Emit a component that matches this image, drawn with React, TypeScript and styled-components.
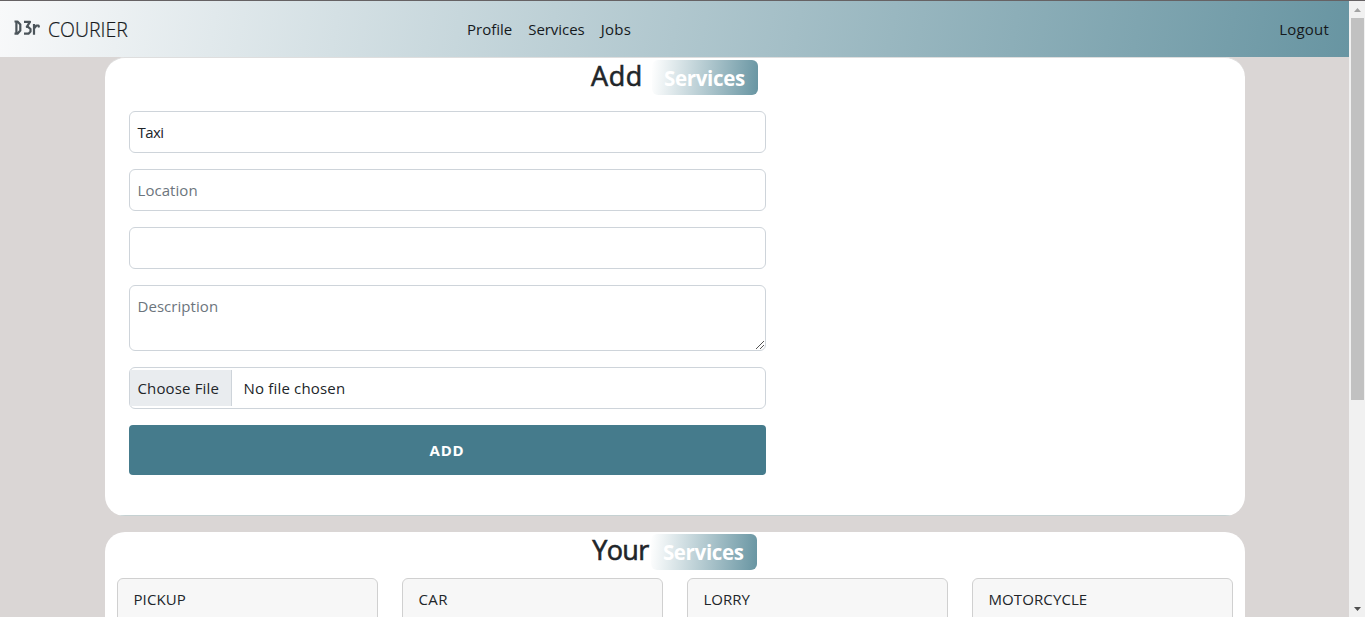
import React from "react";
import styled, { createGlobalStyle } from "styled-components";

const GlobalStyle = createGlobalStyle`
  * { box-sizing: border-box; }
  body {
    margin: 0;
    height: 617px;
    overflow: hidden;
    background: #dad6d5;
    color: #212529;
    font: 400 16px/24px "Open Sans", "Noto Sans", sans-serif;
  }
`;

const fade = "#f8f9fa, #6895a2";

const Text = styled.span<{ $track?: number }>`
  letter-spacing: ${(p) => p.$track ?? 0}px;
  white-space: nowrap;
`;

const Window = styled.div`
  display: flex;
  height: 617px;
  border-top: 1px solid #666264;
  overflow: hidden;
`;

const Page = styled.div`
  flex: 1;
  min-width: 0;
`;

const Navbar = styled.nav`
  display: grid;
  grid-template-columns: 467px 1fr auto;
  align-items: center;
  height: 56px;
  padding-right: 20px;
  background: linear-gradient(100deg, ${fade});
  font-size: 15px;
  color: #15191c;
`;

const Brand = styled.div`
  display: flex;
  align-items: center;
  gap: 8px;
  padding: 2px 0 0 14px;
  font-size: 19.5px;
  font-weight: 300;
  line-height: 30px;
  -webkit-text-stroke: 0.2px currentColor;
`;

const Logo = styled.svg`
  width: 26px;
  height: 18px;
  margin-top: -6px;
`;

const Links = styled.div`
  display: flex;
  gap: 16px;
`;

const Panel = styled.section`
  display: flow-root;
  width: 1140px;
  margin: 0 auto 16px;
  padding: 0 12px;
  border-radius: 20px;
  background: #fff;
`;

const FormPanel = styled(Panel)`
  height: 459px;
  margin-top: 0;
  border-top: 1px solid #dedede;
  background: linear-gradient(#c5d1d2, #c5d1d2) bottom / 1116px 1px no-repeat, #fff;
`;

const Heading = styled.h3<{ $gap: number; $height: number }>`
  display: flex;
  justify-content: center;
  align-items: flex-start;
  gap: ${(p) => p.$gap}px;
  height: ${(p) => p.$height}px;
  margin: 0;
  padding-top: 2px;
  font-size: 27px;
  font-weight: 500;
  line-height: 33px;
  -webkit-text-stroke: 0.6px currentColor;
`;

const Badge = styled.span<{ $height: number }>`
  display: flex;
  justify-content: center;
  width: 106px;
  height: ${(p) => p.$height}px;
  padding-top: 1px;
  padding-right: 1px;
  border-radius: 6px;
  background: linear-gradient(95deg, #fff, #6895a2);
  color: #fff;
  font-size: 20.5px;
  font-weight: 700;
  line-height: 35px;
  -webkit-text-stroke: 0;
`;

const Title = styled(Text)`
  margin-top: -1px;
`;

const Form = styled.div`
  display: flex;
  flex-direction: column;
  gap: 16px;
  width: 637px;
  margin: 16px 0 0 12px;
`;

const Field = styled.div<{ $placeholder?: boolean; $height?: number }>`
  position: relative;
  display: flex;
  align-items: flex-start;
  height: ${(p) => p.$height ?? 42}px;
  padding: 8px;
  border: 1px solid #ced4da;
  border-radius: 6px;
  color: ${(p) => (p.$placeholder ? "#6c757d" : "#212529")};
  background: #fff;
  font-size: 15px;
`;

const FileField = styled(Field)`
  align-items: center;
  padding: 0;
  gap: 12px;
`;

const FileButton = styled.span`
  width: 102px;
  height: 36px;
  padding: 6px 0 0 8px;
  border-right: 1px solid #ced4da;
  background: #e9ecef;
`;

const Grip = styled.svg`
  position: absolute;
  right: 1px;
  bottom: 1px;
  width: 8px;
  height: 8px;
`;

const Submit = styled.button`
  height: 50px;
  padding: 0;
  border: 0;
  border-radius: 4px;
  background: #457b8c;
  color: #fff;
  font: 700 15px/24px "Open Sans", sans-serif;
`;

const Cards = styled.div`
  display: grid;
  grid-template-columns: repeat(4, 1fr);
  gap: 24px;
`;

const Card = styled.article`
  height: 120px;
  border: 1px solid #d0d0d0;
  border-radius: 6px;
  background: #f7f7f7;
  padding: 8px 16px;
  font-size: 15px;
`;

const Scrollbar = styled.div`
  display: flex;
  flex-direction: column;
  align-items: center;
  width: 16px;
  background: #f1f1f1;
`;

const Thumb = styled.div`
  width: 13px;
  height: 382px;
  margin-left: 1px;
  margin-bottom: auto;
  background: #c1c1c1;
`;

const Arrow = styled.svg`
  width: 16px;
  height: 17px;
  flex: none;
`;

export default function App() {
  return (
    <>
      <GlobalStyle />
      <Window>
        <Page>
          <Navbar>
            <Brand>
              <Logo viewBox="0 0 26 18" fill="none" stroke="#4b545a" strokeWidth="2.2" strokeLinejoin="round">
                <path d="M0.500 3.500H3.500L6.300 6.500V12.500L3.500 15.700H0.500M2.400 3.500V15.700" />
                <path d="M10 3.800H16L12.800 8.800H14L16.500 11V13.500L14.500 15.700H10" />
                <path d="M20 6V16.700M20 10.500L22.500 7.500H24.500L25 9.500" />
              </Logo>
              <Text>COURIER</Text>
            </Brand>
            <Links>
              <Text>Profile</Text>
              <Text $track={-0.05}>Services</Text>
              <Text $track={0.3}>Jobs</Text>
            </Links>
            <Text $track={0.2}>Logout</Text>
          </Navbar>
          <FormPanel>
            <Heading $gap={9} $height={37}>
              <Title $track={0.6}>Add</Title>
              <Badge $height={35}>
                <Text $track={-0.35}>Services</Text>
              </Badge>
            </Heading>
            <Form>
              <Field><Text $track={-0.6}>Taxi</Text></Field>
              <Field $placeholder><Text $track={0.05}>Location</Text></Field>
              <Field />
              <Field $placeholder $height={66}>
                <Text $track={0.05}>Description</Text>
                <Grip viewBox="0 0 8 8" stroke="#555" strokeWidth="1">
                  <path d="M0 8L8 0M4 8L8 4" />
                </Grip>
              </Field>
              <FileField>
                <FileButton><Text $track={0.15}>Choose File</Text></FileButton>
                <Text $track={0.18}>No file chosen</Text>
              </FileField>
              <Submit><Text $track={0.8}>ADD</Text></Submit>
            </Form>
          </FormPanel>
          <Panel>
            <Heading $gap={2} $height={46}>
              <Title $track={-0.6}>Your</Title>
              <Badge $height={36}>
                <Text $track={-0.35}>Services</Text>
              </Badge>
            </Heading>
            <Cards>
              <Card><Text $track={0.1}>PICKUP</Text></Card>
              <Card><Text $track={0.4}>CAR</Text></Card>
              <Card><Text>LORRY</Text></Card>
              <Card><Text $track={0.1}>MOTORCYCLE</Text></Card>
            </Cards>
          </Panel>
        </Page>
        <Scrollbar>
          <Arrow viewBox="0 0 16 17" fill="#a3a3a3"><path d="M5 11L8.500 7L12 11Z" /></Arrow>
          <Thumb />
          <Arrow viewBox="0 0 16 17" fill="#505050"><path d="M5 7L8.500 11L12 7Z" /></Arrow>
        </Scrollbar>
      </Window>
    </>
  );
}
